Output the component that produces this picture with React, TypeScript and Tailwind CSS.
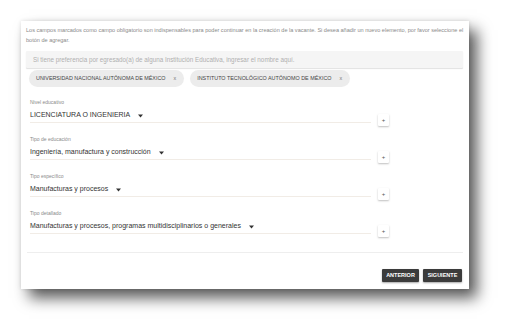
import React from "react";

const fields = [
  { label: "Nivel educativo", value: "LICENCIATURA O INGENIERIA" },
  { label: "Tipo de educación", value: "Ingeniería, manufactura y construcción" },
  { label: "Tipo específico", value: "Manufacturas y procesos" },
  { label: "Tipo detallado", value: "Manufacturas y procesos, programas multidisciplinarios o generales" },
];

function Caret() {
  return (
    <svg width="5" height="4" viewBox="0 0 5 4" className="ml-[8px] mt-[1px]">
      <path d="M0 0.5 L5 0.5 L2.5 3.5 Z" fill="#333" />
    </svg>
  );
}

export default function App() {
  return (
    <div
      className="w-[511px] h-[331px] bg-white overflow-hidden pt-[21px] pl-[21px]"
      style={{ fontFamily: "'Liberation Sans', Arial, sans-serif" }}
    >
      <div className="w-[448px] h-[268px] bg-white shadow-[8px_9px_14px_rgba(0,0,0,0.65),0_0_4px_rgba(0,0,0,0.12)] px-[5px] pt-[5px] flex flex-col">
        <p className="text-[5.55px] leading-[9.5px] text-[#8a8a8a] mr-[-2px]">
          Los campos marcados como campo obligatorio son indispensables para poder continuar en la creación de la vacante. Si desea añadir un nuevo elemento, por favor seleccione el botón de agregar.
        </p>
        <div className="mt-[6px] h-[17px] w-[437px] bg-[#f5f5f5] shadow-[0_1px_1px_rgba(0,0,0,0.12)] rounded-[1px] flex items-center pl-[7px] text-[6.3px] text-[#b0b0b0]">
          Si tiene preferencia por egresado(a) de alguna Institución Educativa, ingresar el nombre aquí.
        </div>
        <div className="mt-[2px] ml-[3px] flex gap-[6px]">
          <div className="h-[17px] rounded-full bg-[#ececec] flex items-center pl-[7px] pr-[8px] text-[5.4px] text-[#444]">
            UNIVERSIDAD NACIONAL AUTÓNOMA DE MÉXICO
            <span className="ml-[8px] text-[#777]">x</span>
          </div>
          <div className="h-[17px] rounded-full bg-[#ececec] flex items-center pl-[7px] pr-[8px] text-[5.4px] text-[#444]">
            INSTITUTO TECNOLÓGICO AUTÓNOMO DE MÉXICO
            <span className="ml-[8px] text-[#777]">x</span>
          </div>
        </div>
        <div className="mt-[11px] pl-[4px] flex flex-col gap-[12px]">
          {fields.map((f) => (
            <div key={f.label} className="flex items-end">
              <div className="w-[341px] flex flex-col">
                <div className="text-[5px] leading-[8px] text-[#8a8a8a]">{f.label}</div>
                <div className="mt-[4px] flex items-center h-[10px] text-[7px] text-[#333] border-b border-[#f1ece6] pb-[2px] box-content">
                  {f.value}
                  <Caret />
                </div>
              </div>
              <div className="ml-[7px] mb-[-3px] w-[11px] h-[12px] bg-white rounded-[1px] shadow-[0_1px_2px_rgba(0,0,0,0.25)] flex items-center justify-center text-[6px] leading-none text-[#555]">
                +
              </div>
            </div>
          ))}
        </div>
        <div className="mt-[18px] ml-[1px] w-[436px] border-t border-[#eeeeee]" />
        <div className="mt-[16px] flex justify-end gap-[4px] pr-[2px]">
          <div className="w-[37px] h-[13px] bg-[#3b3b3b] rounded-[1px] shadow-[0_1px_2px_rgba(0,0,0,0.35)] flex items-center justify-center text-[5.5px] font-bold text-white">
            ANTERIOR
          </div>
          <div className="w-[39px] h-[13px] bg-[#3b3b3b] rounded-[1px] shadow-[0_1px_2px_rgba(0,0,0,0.35)] flex items-center justify-center text-[5.5px] font-bold text-white">
            SIGUIENTE
          </div>
        </div>
      </div>
    </div>
  );
}
